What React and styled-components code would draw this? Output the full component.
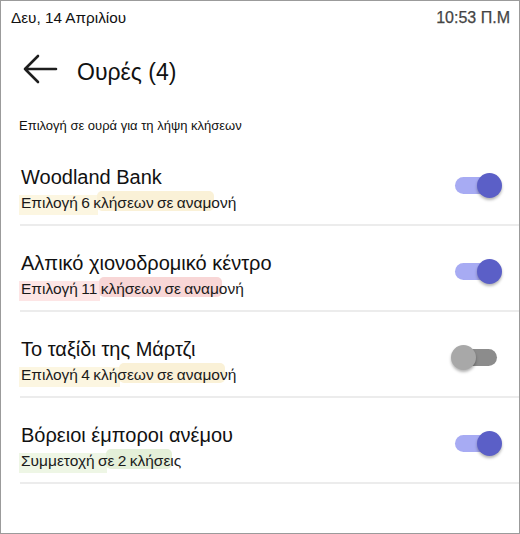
import React from "react";
import styled, { createGlobalStyle } from "styled-components";

const GlobalStyle = createGlobalStyle`
  html, body { margin: 0; padding: 0; background: #ffffff; }
  body { font-family: "Liberation Sans", Arial, sans-serif; color: #111; }
  * { box-sizing: border-box; }
`;

const Frame = styled.div`
  width: 520px;
  height: 534px;
  border: 1px solid #9b9b9b;
  background: #fff;
  display: flex;
  flex-direction: column;
  overflow: hidden;
`;

const StatusBar = styled.div`
  height: 33px;
  display: flex;
  align-items: center;
  justify-content: space-between;
  padding: 0 9px 0 10px;
  font-size: 15px;
  line-height: 33px;
`;

const StatusDate = styled.span`
  color: #111;
  font-size: 15.3px;
`;

const StatusTime = styled.span`
  color: #444;
  font-size: 16px;
  -webkit-text-stroke: 0.25px #444;
`;

const Header = styled.div`
  height: 76px;
  display: flex;
  align-items: center;
  padding-left: 21px;
  gap: 19px;
`;

const BackIcon = styled.svg`
  width: 36px;
  height: 30px;
  margin-bottom: 6px;
  flex-shrink: 0;
`;

const Title = styled.h1`
  margin: 0;
  font-size: 23px;
  font-weight: 400;
  line-height: 76px;
  color: #111;
`;

const SectionLabel = styled.div`
  margin: 8px 0 6px 18px;
  font-size: 13px;
  line-height: 16px;
  color: #111;
`;

const List = styled.div`
  display: flex;
  flex-direction: column;
  padding-left: 19px;
`;

const Row = styled.div`
  height: 86px;
  display: flex;
  align-items: flex-start;
  justify-content: space-between;
  border-bottom: 2px solid #ececec;
  padding: 25px 17px 0 1px;
`;

const TextBlock = styled.div`
  display: flex;
  flex-direction: column;
`;

const RowTitle = styled.div`
  font-size: 20px;
  line-height: 24px;
  color: #111;
`;

const Subtitle = styled.div`
  position: relative;
  isolation: isolate;
  margin-top: 3px;
  font-size: 15.5px;
  line-height: 22px;
  color: #1a1a1a;
  word-spacing: -1px;
`;

const tones = {
  yellow: ["#fcf6e1", "#faf1d7"],
  pink: ["#fde5e5", "#f8d6d6"],
  green: ["#eef6e5", "#e4f0d9"],
};

const MarkFirst = styled.span`
  position: absolute;
  z-index: -1;
  top: 3px;
  height: 20px;
  left: ${(p) => p.$left}px;
  width: ${(p) => p.$width}px;
  background: ${(p) => tones[p.$tone][0]};
`;

const MarkSecond = styled.span`
  position: absolute;
  z-index: -1;
  top: -1px;
  height: 20px;
  left: ${(p) => p.$left}px;
  width: ${(p) => p.$width}px;
  border-radius: 5px;
  background: ${(p) => tones[p.$tone][1]};
`;

const Toggle = styled.div`
  position: relative;
  width: 51px;
  height: 25px;
  margin-top: 7.5px;
  flex-shrink: 0;
`;

const Track = styled.span`
  position: absolute;
  left: 4px;
  top: 4px;
  width: 42px;
  height: 17px;
  border-radius: 9px;
  background: ${(p) => (p.$on ? "#a7abf3" : "#8c8c8c")};
`;

const Knob = styled.span`
  position: absolute;
  top: 0;
  left: ${(p) => (p.$on ? "26px" : "0")};
  width: 25px;
  height: 25px;
  border-radius: 50%;
  background: ${(p) => (p.$on ? "#5b5fc7" : "#a8a8a8")};
  box-shadow: 0 2px 3px rgba(0, 0, 0, 0.3);
`;

const queues = [
  { name: "Woodland Bank", sub: "Επιλογή 6 κλήσεων σε αναμονή", on: true, tone: "yellow", split: 77, end: 193 },
  { name: "Αλπικό χιονοδρομικό κέντρο", sub: "Επιλογή 11 κλήσεων σε αναμονή", on: true, tone: "pink", split: 79, end: 201 },
  { name: "Το ταξίδι της Μάρτζι", sub: "Επιλογή 4 κλήσεων σε αναμονή", on: false, tone: "yellow", split: 99, end: 204 },
  { name: "Βόρειοι έμποροι ανέμου", sub: "Συμμετοχή σε 2 κλήσεις", on: true, tone: "green", split: 86, end: 151 },
];

export default function App() {
  return (
    <>
      <GlobalStyle />
      <Frame>
        <StatusBar>
          <StatusDate>Δευ, 14 Απριλίου</StatusDate>
          <StatusTime>10:53 Π.Μ</StatusTime>
        </StatusBar>
        <Header>
          <BackIcon viewBox="0 0 36 30" fill="none" stroke="#1e1e1e" strokeWidth="2.6" strokeLinecap="round" strokeLinejoin="round">
            <path d="M34 15 H3 M16 2 L3 15 L16 28" />
          </BackIcon>
          <Title>Ουρές (4)</Title>
        </Header>
        <SectionLabel>Επιλογή σε ουρά για τη λήψη κλήσεων</SectionLabel>
        <List>
          {queues.map((q) => (
            <Row key={q.name}>
              <TextBlock>
                <RowTitle>{q.name}</RowTitle>
                <Subtitle>
                  <MarkFirst $tone={q.tone} $left={-2} $width={q.split + 2} />
                  <MarkSecond $tone={q.tone} $left={q.split - 1} $width={q.end - q.split + 1} />
                  {q.sub}
                </Subtitle>
              </TextBlock>
              <Toggle>
                <Track $on={q.on} />
                <Knob $on={q.on} />
              </Toggle>
            </Row>
          ))}
        </List>
      </Frame>
    </>
  );
}
